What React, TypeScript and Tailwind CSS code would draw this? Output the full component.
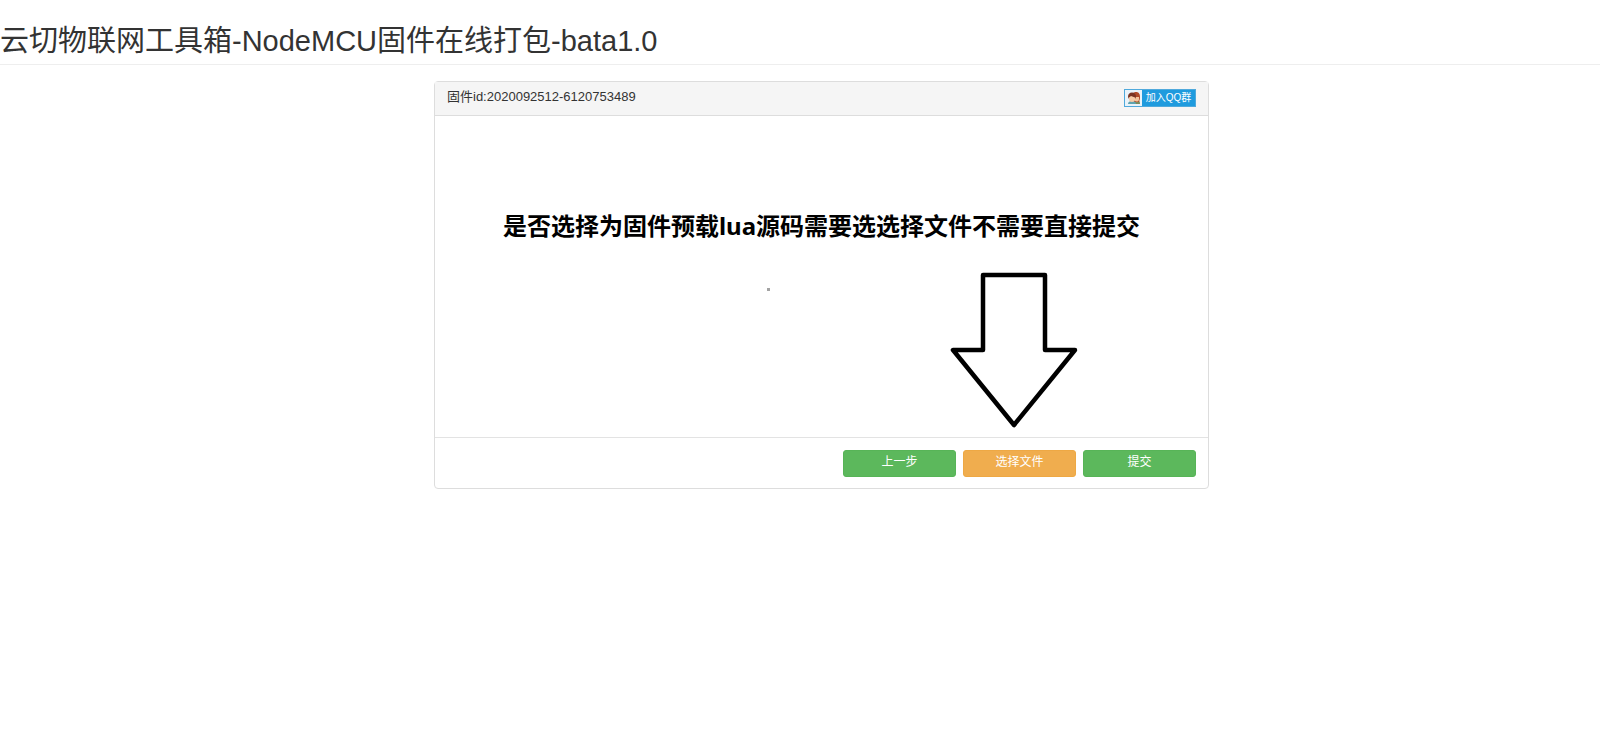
import { useState } from 'react';

const FIRMWARE_ID = '2020092512-6120753489';

// Small "join the QQ group" badge shown in the panel header
function QQGroupLink() {
  return (
    <a
      href="#qq-group"
      className="flex h-[18px] w-[72px] shrink-0 items-stretch border border-[#4fa9dc] bg-[#1f9bde] font-['Liberation_Sans','Noto_Sans_CJK_SC',sans-serif] text-[10px] leading-4 text-white"
    >
      <span className="flex w-[17px] items-center justify-center bg-[#e9f3fa]">
        <svg width="14" height="14" viewBox="0 0 14 14" aria-hidden="true">
          <path d="M7 13c0-3 1-4 3-4s3 1 3 4z" fill="#7d8a5c" />
          <path d="M5 5.500C5 2 7 1 9 1s4 1 4 5c0 2-.5 4-1.500 5H7z" fill="#b04a28" />
          <path d="M7 6h5v2c0 2-1 2.500-2.500 2.500S7 9.500 7 8z" fill="#f3c39c" />
          <path d="M1 13c0-2 1.500-3 4-3s4 1 4 3z" fill="#5fa3b0" />
          <path d="M1 6C1 3 2.500 1.500 5 1.500S9 3 9 6L8 8H2z" fill="#7a3423" />
          <path d="M2 6.500 4 5l4 1.500V8c0 2-1 3-3 3S2 10 2 8z" fill="#f6cba6" />
        </svg>
      </span>
      <span className="flex-1 text-center whitespace-nowrap">加入QQ群</span>
    </a>
  );
}

// Arrow pointing at the file button, with the small speck left of it
function ArrowDrawing() {
  return (
    <svg width="312" height="158" viewBox="0 0 312 158" fill="none" aria-hidden="true">
      <rect x="1" y="17" width="3" height="3" fill="#a3a3a3" />
      <path
        d="M217 4H279V79H309L248 154L187 79H217Z"
        stroke="#000"
        strokeWidth="4.500"
        strokeLinejoin="round"
      />
    </svg>
  );
}

export default function App() {
  const [step, setStep] = useState(2);

  return (
    <div className="min-h-screen bg-white font-['Liberation_Sans','Noto_Sans_CJK_SC',sans-serif] text-[#333]">
      <header className="border-b border-[#eee] pt-[25px] pb-[7px]">
        <h1 className="text-[29px] leading-8 whitespace-nowrap">云切物联网工具箱-NodeMCU固件在线打包-bata1.0</h1>
      </header>

      <main className="mt-4 grid grid-cols-[434fr_775fr_391fr]">
        <section className="col-start-2 rounded-sm border border-[#ddd]" data-step={step}>
          <div className="flex items-start justify-between border-b border-[#ddd] bg-[#f5f5f5] px-3 pt-[7px] pb-2">
            <p className="text-[13px] leading-4">固件id:{FIRMWARE_ID}</p>
            <QQGroupLink />
          </div>

          <div className="flex h-[321px] flex-col pt-[94px]">
            <p className="text-center font-['Noto_Sans','Noto_Sans_CJK_SC',sans-serif] text-2xl leading-8 font-bold whitespace-nowrap text-black">
              是否选择为固件预载lua源码需要选选择文件不需要直接提交
            </p>
            <div className="mt-[29px] flex justify-end pr-[130px]">
              <ArrowDrawing />
            </div>
          </div>

          <div className="flex justify-end gap-[7px] border-t border-[#e3e3e3] px-3 pt-3 pb-[11px]">
            <button
              type="button"
              onClick={() => setStep(step - 1)}
              className="h-[27px] w-[113px] rounded-[3px] border border-[#57b457] bg-[#5cb85c] pb-1 text-xs text-white"
            >
              上一步
            </button>
            <button
              type="button"
              className="h-[27px] w-[113px] rounded-[3px] border border-[#eea844] bg-[#f0ad4e] pb-1 text-xs text-white"
            >
              选择文件
            </button>
            <button
              type="button"
              onClick={() => setStep(step + 1)}
              className="h-[27px] w-[113px] rounded-[3px] border border-[#57b457] bg-[#5cb85c] pb-1 text-xs text-white"
            >
              提交
            </button>
          </div>
        </section>
      </main>
    </div>
  );
}
